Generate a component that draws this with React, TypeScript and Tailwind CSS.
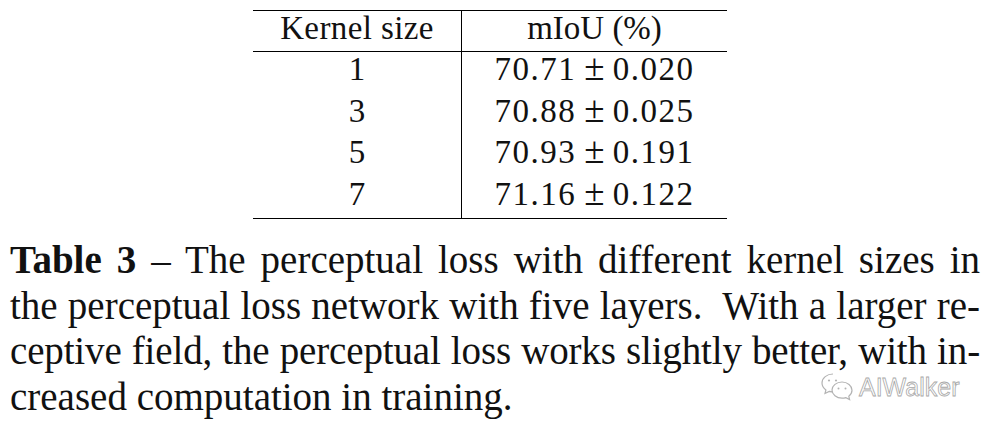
import React from 'react';

const rows = [
  { k: '1', a: '70.71', b: '0.020' },
  { k: '3', a: '70.88', b: '0.025' },
  { k: '5', a: '70.93', b: '0.191' },
  { k: '7', a: '71.16', b: '0.122' },
];

function WeChatLogo() {
  return (
    <svg width="34" height="30" viewBox="0 0 34 30" fill="none">
      {/* big bubble */}
      <path
        d="M13 2C6.9 2 2 6 2 11c0 2.8 1.5 5.2 3.9 6.9L5 21.5l4.2-2.1c1.2.3 2.5.5 3.8.5 .4 0 .8 0 1.2-.1"
        stroke="#b3b3b3"
        strokeWidth="1.2"
        fill="white"
      />
      <circle cx="9" cy="8.5" r="1.1" fill="#b3b3b3" />
      <circle cx="16" cy="8.5" r="1.1" fill="#b3b3b3" />
      {/* small bubble */}
      <path
        d="M22 10c5.5 0 10 3.7 10 8.2 0 2.4-1.2 4.5-3.2 6l.8 3.3-3.7-1.9c-1.2.4-2.5.6-3.9.6-5.5 0-10-3.7-10-8.1S16.5 10 22 10z"
        stroke="#b3b3b3"
        strokeWidth="1.2"
        fill="white"
      />
      <circle cx="18.5" cy="16.5" r="1" fill="#b3b3b3" />
      <circle cx="25.5" cy="16.5" r="1" fill="#b3b3b3" />
    </svg>
  );
}

export default function App() {
  return (
    <div className="relative w-[994px] h-[430px] overflow-hidden bg-white text-[#111] font-['Liberation_Serif','Times_New_Roman',serif]">
      {/* table */}
      <div className="pt-[10px] pl-[253px]">
        <div className="w-[474px] border-t-[1.5px] border-b-[1.5px] border-black text-[33px]">
          <div className="flex h-[41px] border-b border-black leading-[35px]">
            <div className="w-[209px] border-r border-black text-center tracking-[0.4px]">Kernel size</div>
            <div className="flex-1 text-center">mIoU (%)</div>
          </div>
          {rows.map((r) => (
            <div key={r.k} className="flex h-[41.5px] leading-[35px]">
              <div className="w-[209px] border-r border-black text-center">{r.k}</div>
              <div className="flex-1 text-center whitespace-nowrap">
                <span className="tracking-[1.5px]">{r.a}</span>
                <span className="mx-[8px] text-[37px] leading-[0]">±</span>
                <span className="tracking-[1.5px]">{r.b}</span>
              </div>
            </div>
          ))}
        </div>
      </div>

      {/* caption */}
      <div className="mt-[18px] ml-[10px] w-[970px] text-[39px] leading-[45.7px]">
        <div className="whitespace-nowrap text-justify [text-align-last:justify]">
          <span className="font-bold">Table 3</span> – The perceptual loss with different kernel sizes in
        </div>
        <div className="whitespace-nowrap text-justify [text-align-last:justify]">
          the perceptual loss network with five layers.&nbsp; With a larger re-
        </div>
        <div className="whitespace-nowrap text-justify [text-align-last:justify] tracking-[-0.15px]">
          ceptive field, the perceptual loss works slightly better, with in-
        </div>
        <div className="whitespace-nowrap">creased computation in training.</div>
      </div>

      {/* watermark */}
      <div className="absolute left-[820px] top-[372px] flex items-center gap-[5px]">
        <WeChatLogo />
        <span className="font-['Liberation_Sans',Arial,sans-serif] text-[25px] leading-none text-white [-webkit-text-stroke:0.8px_#a8a8a8]">
          AIWalker
        </span>
      </div>
    </div>
  );
}
